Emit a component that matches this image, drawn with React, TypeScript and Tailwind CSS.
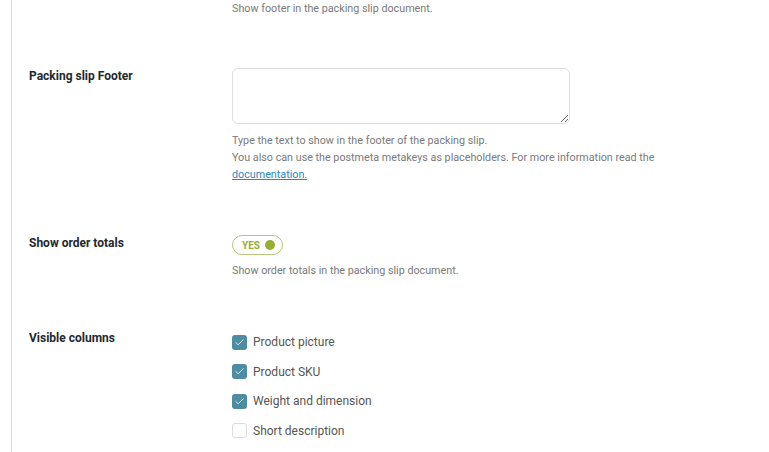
import { Check } from "lucide-react";

type ColumnOption = {
  label: string;
  checked: boolean;
};

const columns: ColumnOption[] = [
  { label: "Product picture", checked: true },
  { label: "Product SKU", checked: true },
  { label: "Weight and dimension", checked: true },
  { label: "Short description", checked: false },
];

function Description({ children }: { children: React.ReactNode }) {
  return <p className="text-[10.75px] leading-[17px] text-[#7a7a7a]">{children}</p>;
}

function Label({ children }: { children: React.ReactNode }) {
  return (
    <div className="w-[203px] shrink-0 text-[12px] font-bold leading-[16px] text-[#23282d]">{children}</div>
  );
}

function Toggle() {
  return (
    <div className="flex h-[20px] w-[51px] items-center justify-between rounded-full border border-[#b5c67a] pl-[9px] pr-[7px]">
      <span className="text-[10px] font-bold text-[#96ad35]">YES</span>
      <span className="h-[10px] w-[10px] rounded-full bg-[#96ad35]" />
    </div>
  );
}

export default function App() {
  return (
    <div className="h-[452px] w-[769px] overflow-hidden bg-white font-['Roboto',sans-serif]">
      <div className="ml-[11px] h-full border-l border-[#dcdcdc] pl-[17px]">
        {/* tail of the previous setting */}
        <div className="flex">
          <Label>{""}</Label>
          <Description>Show footer in the packing slip document.</Description>
        </div>

        {/* footer text */}
        <div className="mt-[51px] flex">
          <Label>Packing slip Footer</Label>
          <div>
            <textarea className="block h-[56px] w-[338px] rounded-[6px] border border-[#dedede] bg-white" />
            <div className="mt-[8px]">
              <Description>
                Type the text to show in the footer of the packing slip.
                <br />
                You also can use the postmeta metakeys as placeholders. For more information read the
                <br />
                <a href="#" className="text-[#2e86c1] underline">
                  documentation.
                </a>
              </Description>
            </div>
          </div>
        </div>

        {/* order totals */}
        <div className="mt-[52px] flex">
          <Label>Show order totals</Label>
          <div>
            <Toggle />
            <div className="mt-[7px]">
              <Description>Show order totals in the packing slip document.</Description>
            </div>
          </div>
        </div>

        {/* columns */}
        <div className="mt-[51px] flex">
          <Label>Visible columns</Label>
          <ul className="flex flex-col gap-[5.5px]">
            {columns.map((c) => (
              <li key={c.label} className="flex h-[24px] items-center gap-[6px]">
                <span
                  className={
                    c.checked
                      ? "flex h-[15px] w-[15px] items-center justify-center rounded-[3px] bg-[#4d8ca3]"
                      : "h-[15px] w-[15px] rounded-[3px] border border-[#dcdcdc] bg-white"
                  }
                >
                  {c.checked && <Check size={11} strokeWidth={1.75} className="text-white" />}
                </span>
                <span className="text-[12px] text-[#555]">{c.label}</span>
              </li>
            ))}
          </ul>
        </div>
      </div>
    </div>
  );
}
